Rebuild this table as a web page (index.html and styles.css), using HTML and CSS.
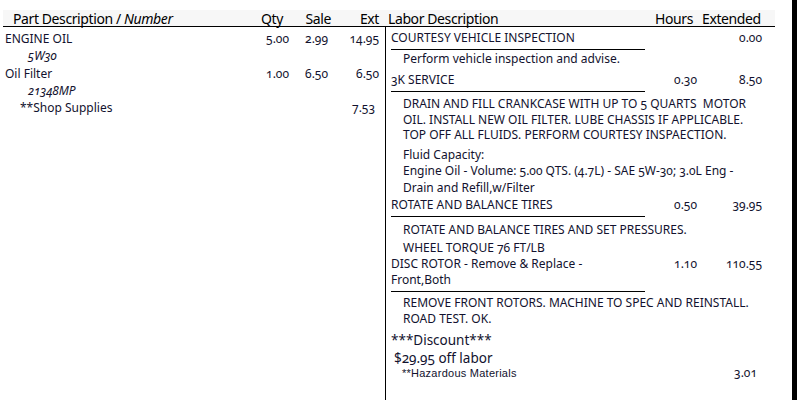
FILE: index.html
```html
<!DOCTYPE html>
<html>
<head>
<meta charset="utf-8">
<link rel="stylesheet" href="styles.css">
</head>
<body>
<div class="sheet">
  <div class="head">
    <div class="hparts">
      <span class="h-desc">Part Description / <i>Number</i></span>
      <span class="h-qty">Qty</span>
      <span class="h-sale">Sale</span>
      <span class="h-ext">Ext</span>
    </div>
    <div class="hlabor">
      <span class="h-ldesc">Labor Description</span>
      <span class="h-hours">Hours</span>
      <span class="h-extd">Extended</span>
    </div>
  </div>
  <div class="body">
    <div class="parts">
      <div class="prow"><span>ENGINE OIL</span><span class="num">5.00</span><span class="num">2.99</span><span class="num">14.95</span></div>
      <div class="pnum">5W30</div>
      <div class="prow"><span>Oil Filter</span><span class="num">1.00</span><span class="num">6.50</span><span class="num">6.50</span></div>
      <div class="pnum">21348MP</div>
      <div class="prow supply"><span>**Shop Supplies</span><span></span><span></span><span class="num">7.53</span></div>
    </div>
    <div class="labor">
      <div class="item first">
        <div class="title">COURTESY VEHICLE INSPECTION</div>
        <div class="num"></div>
        <div class="num">0.00</div>
      </div>
      <div class="note n1">Perform vehicle inspection and advise.</div>

      <div class="item i2">
        <div class="title">3K SERVICE</div>
        <div class="num">0.30</div>
        <div class="num">8.50</div>
      </div>
      <div class="note n2 caps">DRAIN AND FILL CRANKCASE WITH UP TO 5 QUARTS &nbsp;MOTOR<br>OIL. INSTALL NEW OIL FILTER. LUBE CHASSIS IF APPLICABLE.<br>TOP OFF ALL FLUIDS. PERFORM COURTESY INSPAECTION.</div>
      <div class="note n3">Fluid Capacity:<br>Engine Oil - Volume: 5.00 QTS. (4.7L) - SAE 5W-30; 3.0L Eng -<br>Drain and Refill,w/Filter</div>

      <div class="item i3">
        <div class="title">ROTATE AND BALANCE TIRES</div>
        <div class="num">0.50</div>
        <div class="num">39.95</div>
      </div>
      <div class="note n4">ROTATE AND BALANCE TIRES AND SET PRESSURES.</div>
      <div class="note n5">WHEEL TORQUE 76 FT/LB</div>

      <div class="item i4">
        <div class="title">DISC ROTOR - Remove &amp; Replace -<br>Front,Both</div>
        <div class="num">1.10</div>
        <div class="num">110.55</div>
      </div>
      <div class="note n6">REMOVE FRONT ROTORS. MACHINE TO SPEC AND REINSTALL.<br>ROAD TEST. OK.</div>

      <div class="discount">***Discount***</div>
      <div class="discount off">$29.95 off labor</div>
      <div class="hazard"><span class="hz">**Hazardous Materials</span><span class="num">3.01</span></div>
    </div>
  </div>
  <div class="edge"></div>
</div>
</body>
</html>
```

FILE: styles.css
```css
* { box-sizing: border-box; }
html, body { margin: 0; padding: 0; background: #fff; }
body {
  font-family: "Noto Sans", "Open Sans", sans-serif;
  font-variant-numeric: oldstyle-nums;
  font-size: 12px;
  color: #12122e;
  width: 797px;
  height: 400px;
  overflow: hidden;
}
.sheet {
  position: relative;
  height: 400px;
  padding-top: 10px;
}
.edge {
  position: absolute;
  top: 0;
  right: 0;
  width: 5px;
  height: 400px;
  background: #000;
}
.head {
  display: flex;
  margin-left: 3px;
  width: 772px;
  height: 17px;
  background: #f7f7f7;
  border-bottom: 1px solid #000;
  font-size: 14px;
  letter-spacing: -0.4px;
  line-height: 17px;
  color: #000;
}
.hparts {
  width: 382px;
  display: grid;
  grid-template-columns: 1fr 50px 39px 51px;
  padding-right: 6px;
}
.h-desc { padding-left: 10px; white-space: nowrap; }
.h-qty { text-align: right; padding-right: 6px; }
.h-sale { text-align: right; margin-right: -3px; }
.h-ext { text-align: right; }
.hlabor {
  flex: 1;
  display: flex;
  padding-left: 3px;
}
.h-ldesc { flex: 1; }
.h-hours { width: 50px; text-align: right; padding-right: 3px; }
.h-extd { width: 79px; padding-left: 6px; }

.body {
  display: flex;
  height: 373px;
}
.parts {
  width: 386px;
  border-right: 1px solid #000;
  padding: 3px 6px 0 5px;
  line-height: 17.3px;
}
.prow {
  display: grid;
  grid-template-columns: 1fr 50px 39px 51px;
}
.num { text-align: right; }
.pnum {
  padding-left: 23px;
  font-style: italic;
}
.supply span:first-child { padding-left: 15px; }
.supply .num { padding-right: 4px; }

.labor {
  flex: 1;
  padding-left: 5px;
  line-height: 16px;
}
.item {
  display: grid;
  grid-template-columns: 254px 52px 65px;
  align-items: start;
}
.item .title {
  border-bottom: 1px solid #000;
  padding-bottom: 3px;
}
.item.first { margin-top: 3px; }
.item.i2 { margin-top: 5px; }
.item.i3 { margin-top: 1px; }
.item.i4 { margin-top: 0; }
.note { padding-left: 12px; }
.n1 { margin-top: 1px; }
.n2 { margin-top: 4px; line-height: 15.5px; }
.n3 { margin-top: 4px; line-height: 16.5px; }
.n4 { margin-top: 5px; }
.n5 { margin-top: 2px; }
.n6 { margin-top: 3px; }
.discount {
  font-size: 13.5px;
  line-height: 19px;
  margin-top: 4px;
}
.discount.off { margin-top: -1px; padding-left: 3px; }
.hazard {
  display: grid;
  grid-template-columns: 1fr 60px;
  width: 366px;
  line-height: 14px;
  margin-top: -2px;
  padding-left: 11px;
}
.hz {
  font-family: "Liberation Sans", sans-serif;
  font-size: 11px;
  letter-spacing: 0.25px;
}
```
